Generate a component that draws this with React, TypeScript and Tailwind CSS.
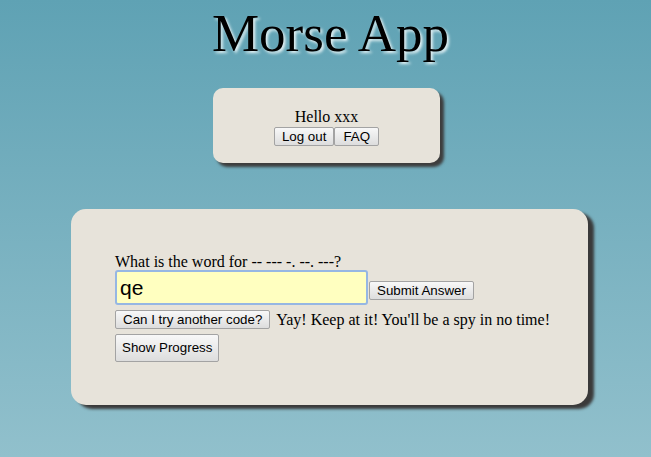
import { useState } from 'react';

const btn =
  "font-['Liberation_Sans',Arial,sans-serif] text-[13.33px] text-black bg-linear-to-b from-[#f8f8f8] to-[#dddddd] border border-[#a3a3a3] rounded-[2px] leading-none whitespace-nowrap shrink-0";

export default function App() {
  const [answer, setAnswer] = useState('qe');

  return (
    <div className="min-h-screen w-full bg-linear-to-b from-[#5fa2b4] to-[#91c0cc] font-['Liberation_Serif','Times_New_Roman',serif] text-black text-[16px]">
      {/* Title */}
      <h1 className="pt-[3px] pl-[10px] text-center text-[53px] leading-[61px] [text-shadow:2px_2px_3px_#e8f4f6]">
        Morse App
      </h1>

      {/* User box */}
      <div className="flex justify-center mt-[24px] pl-[2px]">
        <div className="w-[227px] h-[75px] bg-[#e7e3da] rounded-[10px] shadow-[4px_4px_3px_#3d3d3d] flex flex-col items-center pt-[19px]">
          <p className="leading-[19px]">Hello xxx</p>
          <div className="flex mt-[1px]">
            <button className={`${btn} h-[19px] px-[7px]`}>Log out</button>
            <button className={`${btn} h-[19px] px-[8px]`}>FAQ</button>
          </div>
        </div>
      </div>

      {/* Quiz box */}
      <div className="flex justify-center mt-[46px] pl-[8px]">
        <div className="w-[517px] bg-[#e7e3da] rounded-[15px] shadow-[6px_4px_3px_#3a3a3a] pt-[44px] pb-[43px] px-[44px]">
          <p className="leading-[17px] whitespace-nowrap">What is the word for -- --- -. --. ---?</p>
          <div className="flex items-end">
            <input
              value={answer}
              onChange={(e) => setAnswer(e.target.value)}
              className="w-[253px] h-[35px] bg-[#ffffc0] border-2 border-[#96b7e3] rounded-[3px] px-[3px] font-['Liberation_Sans',Arial,sans-serif] text-[21px] outline-none"
            />
            <button className={`${btn} h-[19px] px-[7px] ml-[1px] mb-[5px]`}>Submit Answer</button>
          </div>
          <div className="flex items-center mt-[5px]">
            <button className={`${btn} h-[19px] px-[7px]`}>Can I try another code?</button>
            <span className="ml-[6px] leading-[19px] whitespace-nowrap">Yay! Keep at it! You'll be a spy in no time!</span>
          </div>
          <button className={`${btn} h-[28px] px-[6px] mt-[5px] block`}>Show Progress</button>
        </div>
      </div>
    </div>
  );
}
